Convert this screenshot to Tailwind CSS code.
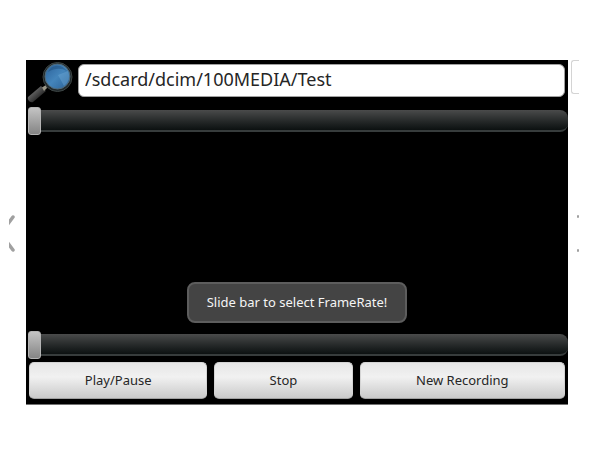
<!DOCTYPE html>
<html lang="en">
<head>
    <meta charset="UTF-8">
    <meta name="viewport" content="width=device-width, initial-scale=1.0">
    <title>Time lapse player</title>
    <script src="https://cdn.jsdelivr.net/npm/@tailwindcss/browser@4"></script>
</head>
<body class="bg-white font-['Noto_Sans',sans-serif]">
    <div class="flex pt-[60px]">
        <button class="flex items-center justify-end w-[26px] pr-2 shrink-0" type="button" aria-label="Previous">
            <svg class="w-[9px] h-10" viewBox="0 0 9 40" fill="none" stroke="#a0a0a0" stroke-width="3.5" stroke-linecap="round">
                <path d="M4 4L-2 12M4 37L-2 29" />
            </svg>
        </button>

        <main class="flex-1 min-w-0 bg-black border-b border-neutral-500">
            <div class="flex items-start pt-1 pr-[3px]">
                <svg class="w-[52px] h-[43px] -mt-1 shrink-0" viewBox="0 0 52 43" aria-hidden="true">
                    <defs>
                        <linearGradient id="lens" x1="0" y1="0" x2="1" y2="1">
                            <stop offset="0" stop-color="#2a5f97" />
                            <stop offset=".5" stop-color="#4485bb" />
                            <stop offset="1" stop-color="#2a6096" />
                        </linearGradient>
                        <linearGradient id="handle" x1="0" y1="0" x2="1" y2="1">
                            <stop offset=".3" stop-color="#666" />
                            <stop offset=".7" stop-color="#262626" />
                        </linearGradient>
                    </defs>
                    <path d="M15 26L20 31L7 42C4 43 1 40 2 37Z" fill="url(#handle)" />
                    <path d="M16 27.500L20 25L21 28L18 31Z" fill="#9a9788" />
                    <circle cx="31.500" cy="17" r="14.500" fill="#20282b" stroke="#3d4544" />
                    <circle cx="31.500" cy="16.500" r="12.500" fill="url(#lens)" stroke="#526b79" />
                    <path d="M32 15L42 11A12 12 0 0 1 38 26Z" fill="#85bce3" opacity=".3" />
                    <path d="M22 12C26 4 36 4 41 11C35 8 29 8 22 12Z" fill="#17436d" opacity=".4" />
                </svg>
                <input
                    class="block flex-1 min-w-0 h-[33px] rounded-md outline-none border border-neutral-400 bg-white px-[6px] pb-[3px] text-[18px] text-neutral-800"
                    name="path"
                    type="text"
                    aria-label="Recording folder"
                    value="/sdcard/dcim/100MEDIA/Test"
                >
            </div>

            <input
                class="block appearance-none w-full h-7 mt-1 pl-[2px] bg-transparent [&::-webkit-slider-runnable-track]:h-[22px] [&::-webkit-slider-runnable-track]:rounded-r-[8px] [&::-webkit-slider-runnable-track]:border-b-2 [&::-webkit-slider-runnable-track]:border-[#373c3c] [&::-webkit-slider-runnable-track]:bg-linear-to-b [&::-webkit-slider-runnable-track]:from-[#4a4b4b] [&::-webkit-slider-runnable-track]:to-[#0c1111] [&::-webkit-slider-thumb]:appearance-none [&::-webkit-slider-thumb]:w-[13px] [&::-webkit-slider-thumb]:h-7 [&::-webkit-slider-thumb]:-mt-[3px] [&::-webkit-slider-thumb]:rounded-[3px] [&::-webkit-slider-thumb]:border [&::-webkit-slider-thumb]:border-[#b4b4b4] [&::-webkit-slider-thumb]:bg-linear-to-b [&::-webkit-slider-thumb]:from-[#c4c4c4] [&::-webkit-slider-thumb]:to-[#858585]"
                name="position"
                type="range"
                aria-label="Position"
                value="0"
            >

            <div class="flex justify-center pt-[147px] pb-2">
                <p class="rounded-lg border-2 border-[#5d5d5d] bg-[#444] px-[18px] pt-2 pb-2 text-[13px] leading-[21px] text-neutral-100" role="status">
                    Slide bar to select FrameRate!
                </p>
            </div>

            <input
                class="block appearance-none w-full h-7 pl-[2px] bg-transparent [&::-webkit-slider-runnable-track]:h-[22px] [&::-webkit-slider-runnable-track]:rounded-r-[8px] [&::-webkit-slider-runnable-track]:border-b-2 [&::-webkit-slider-runnable-track]:border-[#373c3c] [&::-webkit-slider-runnable-track]:bg-linear-to-b [&::-webkit-slider-runnable-track]:from-[#4a4b4b] [&::-webkit-slider-runnable-track]:to-[#0c1111] [&::-webkit-slider-thumb]:appearance-none [&::-webkit-slider-thumb]:w-[13px] [&::-webkit-slider-thumb]:h-7 [&::-webkit-slider-thumb]:-mt-[3px] [&::-webkit-slider-thumb]:rounded-[3px] [&::-webkit-slider-thumb]:border [&::-webkit-slider-thumb]:border-[#b4b4b4] [&::-webkit-slider-thumb]:bg-linear-to-b [&::-webkit-slider-thumb]:from-[#c4c4c4] [&::-webkit-slider-thumb]:to-[#858585]"
                name="frameRate"
                type="range"
                aria-label="Frame rate"
                value="0"
            >

            <div class="grid grid-cols-[178fr_138fr_205fr] gap-[7px] px-[3px] pt-[3px] pb-[5px] text-[13px] text-neutral-800">
                <button class="h-[37px] rounded-[5px] border border-neutral-300 border-b-neutral-400 bg-linear-to-b from-[#e6e6e6] via-[#f1f1f1] via-40% to-[#cacaca]" type="button">Play/Pause</button>
                <button class="h-[37px] rounded-[5px] border border-neutral-300 border-b-neutral-400 bg-linear-to-b from-[#e6e6e6] via-[#f1f1f1] via-40% to-[#cacaca]" type="button">Stop</button>
                <button class="h-[37px] rounded-[5px] border border-neutral-300 border-b-neutral-400 bg-linear-to-b from-[#e6e6e6] via-[#f1f1f1] via-40% to-[#cacaca]" type="button">New Recording</button>
            </div>
        </main>

        <button class="flex flex-col w-8 pl-[3px] shrink-0" type="button" aria-label="Next">
            <span class="block w-2 h-[34px] rounded-l-[3px] border border-r-0 border-neutral-300"></span>
            <svg class="w-[9px] h-10 mt-[119px]" viewBox="0 0 9 40" fill="none" stroke="#a0a0a0" stroke-width="2" stroke-linecap="round">
                <path d="M7 3v1M7 37v1" />
            </svg>
        </button>
    </div>
</body>
</html>
